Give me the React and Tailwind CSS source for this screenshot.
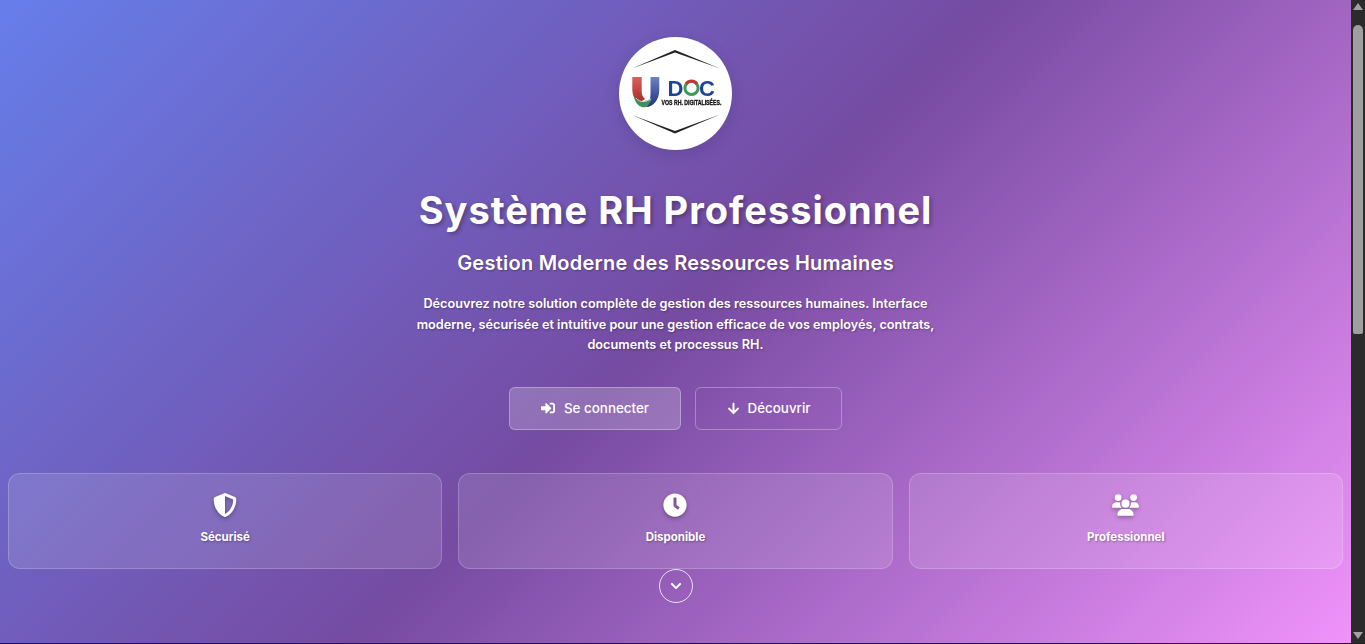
import { FaShieldAlt, FaClock, FaSignInAlt, FaArrowDown, FaChevronDown } from 'react-icons/fa';
import { FaUsers } from 'react-icons/fa6';

const smallShadow = '[text-shadow:1px_1px_2px_rgba(0,0,0,0.3)]';

// logo drawn by hand, the original is a small blurry bitmap
function Logo() {
  return (
    <div className="w-[113px] h-[113px] rounded-full bg-white shadow-[0_4px_16px_rgba(0,0,0,0.12)] shrink-0">
      <svg viewBox="0 0 113 113" width="113" height="113" className="blur-[0.5px]">
        <defs>
          <linearGradient id="redArm" x1="0" y1="0" x2="0" y2="1">
            <stop offset="0" stopColor="#d9605a" />
            <stop offset="1" stopColor="#a82a28" />
          </linearGradient>
          <linearGradient id="blueArm" x1="0" y1="0" x2="0" y2="1">
            <stop offset="0" stopColor="#6f80c4" />
            <stop offset="1" stopColor="#1f2f80" />
          </linearGradient>
        </defs>
        <path d="M13 31.5 L56 13 L101 31.5 L56 15.5 Z" fill="#222" />
        <path d="M13 78 L56 96.5 L101 77.5 L56 94 Z" fill="#222" />
        <path d="M13.3 40 H22.7 V54 C22.7 58 24 60 26 62 L20 66 C15.5 62 13.3 58 13.3 53 Z" fill="url(#redArm)" />
        <path d="M31.5 40 H40.3 V53 C40.3 63 34 70 27 70 C31 66 31.5 60 31.5 55 Z" fill="url(#blueArm)" />
        <path d="M14.5 58 C18 65 25 66 33 61 C31 67 28 70.3 25 70.3 C19 70.3 15.5 64 14.5 58 Z" fill="#3f8f5c" />
        <path d="M17 61 C21 66 27 65 32 62" fill="none" stroke="#fff" strokeWidth="0.7" />
        <text x="48.5" y="59" fontFamily="Liberation Sans, sans-serif" fontWeight="700" fontSize="22" fill="#1c4596">D</text>
        <circle cx="72.5" cy="51" r="6.6" fill="none" stroke="#3f9a5a" strokeWidth="3" />
        <path d="M67 47 A6.6 6.6 0 0 1 78 47" fill="none" stroke="#c8382f" strokeWidth="3" />
        <text x="80" y="59" fontFamily="Liberation Sans, sans-serif" fontWeight="700" fontSize="22" fill="#1c4596">C</text>
        <text transform="translate(42.5 68) scale(1 1.25)" fontFamily="Liberation Sans, sans-serif" fontWeight="700" fontSize="5.2" fill="#111" stroke="#111" strokeWidth="0.25">VOS RH. DIGITALISÉES.</text>
      </svg>
    </div>
  );
}

function Feature({ icon: Icon, label, iconClass }) {
  return (
    <div className="h-[96px] rounded-xl border border-white/20 bg-white/[0.12] flex flex-col items-center pt-[19px] text-white">
      <div className="h-[24px] flex items-center">
        <Icon className={`${iconClass} drop-shadow-[0_2px_2px_rgba(0,0,0,0.3)]`} />
      </div>
      <span className={`mt-[11px] text-[11.5px] leading-[18px] font-bold ${smallShadow}`}>{label}</span>
    </div>
  );
}

export default function App() {
  return (
    <div className="h-[644px] overflow-hidden flex flex-col bg-[#1d1d1d] font-['Inter',sans-serif]">
      <div className="flex h-[643px]">
        <main className="flex-1 min-w-0 flex flex-col items-center pt-[37px] px-2 text-white bg-[linear-gradient(135deg,#667eea_0%,#764ba2_50%,#f093fb_100%)]">
          <Logo />
          <h1 className="mt-[32px] text-[38px] leading-[56px] font-bold tracking-[1px] [text-shadow:2px_2px_4px_rgba(0,0,0,0.3)]">Système RH Professionnel</h1>
          <h2 className={`mt-[10px] text-[20px] leading-[30px] font-semibold tracking-[0.25px] ${smallShadow}`}>Gestion Moderne des Ressources Humaines</h2>
          <p className={`mt-[16px] w-[540px] text-center text-[12.7px] leading-[20.5px] font-semibold ${smallShadow}`}>
            Découvrez notre solution complète de gestion des ressources humaines. Interface moderne, sécurisée et intuitive pour une gestion efficace de vos employés, contrats, documents et processus RH.
          </p>
          <div className="mt-[31px] flex gap-[14px]">
            <button className="w-[172px] h-[43px] rounded-md border border-white/30 bg-white/20 flex items-center justify-center gap-[9px] text-[13.4px] font-medium">
              <FaSignInAlt className="w-[14px] h-[14px]" />
              Se connecter
            </button>
            <button className="w-[147px] h-[43px] rounded-md border border-white/30 flex items-center justify-center gap-[8px] text-[13.4px] font-medium">
              <FaArrowDown className="w-[13px] h-[13px]" />
              Découvrir
            </button>
          </div>
          <div className="mt-[43px] w-full grid grid-cols-3 gap-[16px]">
            <Feature icon={FaShieldAlt} iconClass="w-[24px] h-[24px]" label="Sécurisé" />
            <Feature icon={FaClock} iconClass="w-[24px] h-[24px]" label="Disponible" />
            <Feature icon={FaUsers} iconClass="w-[27px] h-[22px]" label="Professionnel" />
          </div>
          <div className="w-[34px] h-[34px] rounded-full border border-white/80 flex items-center justify-center">
            <FaChevronDown className="w-[12px] h-[12px]" />
          </div>
        </main>
        {/* scrollbar */}
        <div className="w-[14px] shrink-0 bg-[#2b2b2b] flex flex-col items-center">
          <div className="mt-[3px] w-0 h-0 border-x-[5px] border-x-transparent border-b-[7px] border-b-[#a0a0a0]" />
          <div className="mt-[15px] w-[10px] h-[309px] rounded-t-[5px] rounded-b-[2px] bg-[#9f9f9f]" />
          <div className="mt-auto mb-[4px] w-0 h-0 border-x-[5px] border-x-transparent border-t-[7px] border-t-[#a0a0a0]" />
        </div>
      </div>
    </div>
  );
}
